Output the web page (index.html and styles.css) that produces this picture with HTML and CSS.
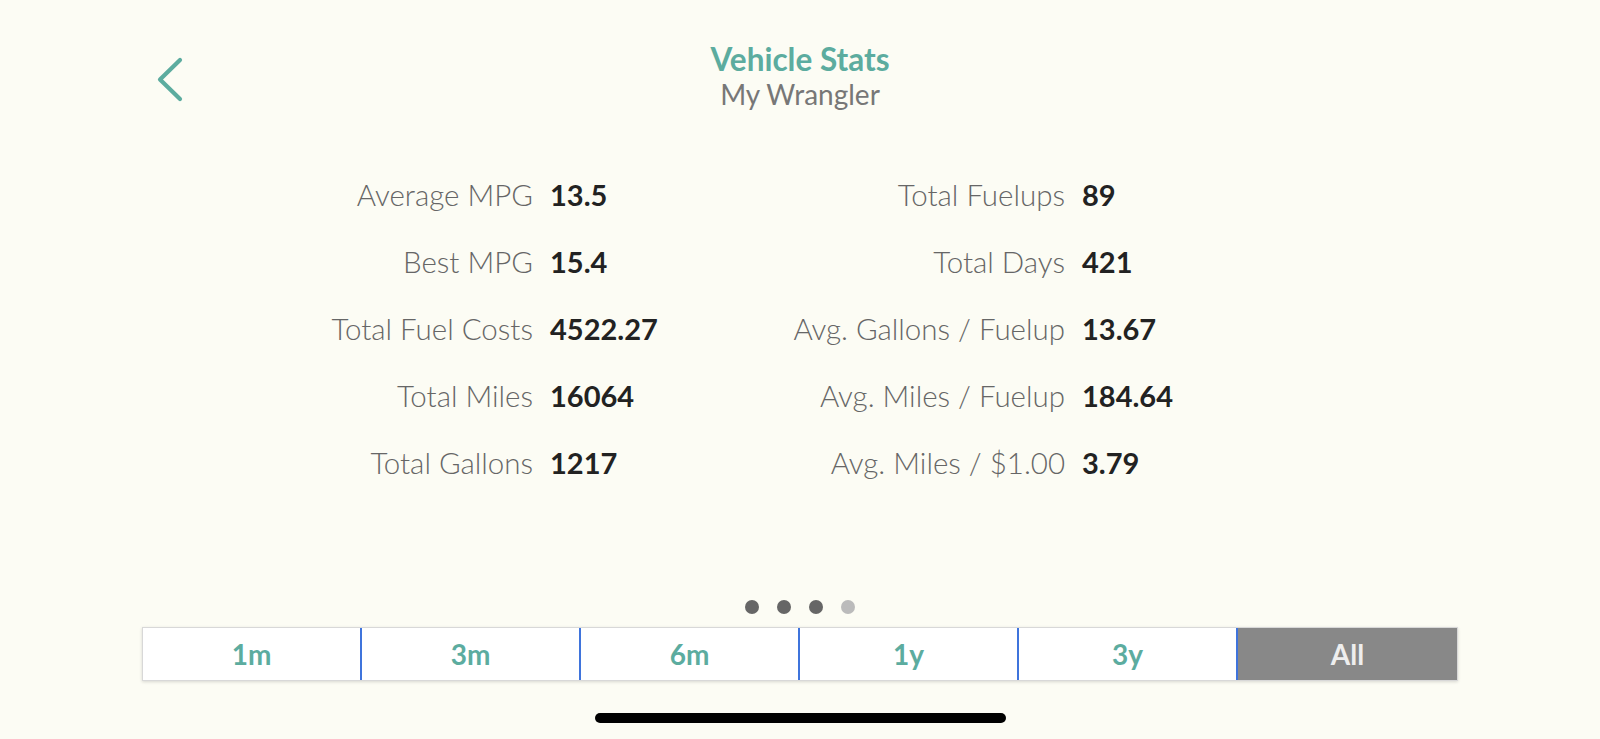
FILE: index.html
```html
<!DOCTYPE html>
<html lang="en">

<head>
    <meta charset="UTF-8">
    <meta name="viewport" content="width=device-width, initial-scale=1.0">
    <title>Vehicle Stats - My Wrangler</title>
    <link rel="stylesheet" href="styles.css">
</head>

<body>

    <header class="top-bar">
        <a class="back" href="#" aria-label="Back">
            <svg width="28" height="46" viewBox="0 0 28 46">
                <path d="M24 4 L4 23.5 L24 43" fill="none" stroke="#5cac9f" stroke-width="4.2" stroke-linecap="round" stroke-linejoin="round"/>
            </svg>
        </a>
        <div class="titles">
            <h1>Vehicle Stats</h1>
            <p>My Wrangler</p>
        </div>
        <div></div>
    </header>

    <main>
        <section class="stats">
            <span class="label">Average MPG</span><span class="value">13.5</span>
            <span class="label">Total Fuelups</span><span class="value">89</span>

            <span class="label">Best MPG</span><span class="value">15.4</span>
            <span class="label">Total Days</span><span class="value">421</span>

            <span class="label">Total Fuel Costs</span><span class="value">4522.27</span>
            <span class="label">Avg. Gallons / Fuelup</span><span class="value">13.67</span>

            <span class="label">Total Miles</span><span class="value">16064</span>
            <span class="label">Avg. Miles / Fuelup</span><span class="value">184.64</span>

            <span class="label">Total Gallons</span><span class="value">1217</span>
            <span class="label">Avg. Miles / $1.00</span><span class="value">3.79</span>
        </section>

        <div class="pager">
            <span class="dot"></span>
            <span class="dot"></span>
            <span class="dot"></span>
            <span class="dot dim"></span>
        </div>

        <div class="ranges">
            <button>1m</button>
            <button>3m</button>
            <button>6m</button>
            <button>1y</button>
            <button>3y</button>
            <button class="active">All</button>
        </div>
    </main>

    <div class="home-bar"></div>

</body>

</html>
```

FILE: styles.css
```css
body {
    font-family: Lato, 'Open Sans', sans-serif;
    margin: 0;
    padding: 0;
    background-color: #fcfcf4;
    color: #222;
    height: 739px;
    overflow: hidden;
}

.top-bar {
    display: grid;
    grid-template-columns: 1fr auto 1fr;
    padding-top: 41px;
}

.back {
    justify-self: start;
    margin-left: 156px;
    margin-top: 15px;
    display: block;
}

.titles {
    text-align: center;
}

.titles h1 {
    margin: 0;
    font-size: 31.5px;
    line-height: 1.15;
    font-weight: 700;
    color: #5cac9f;
}

.titles p {
    margin: 1px 0 0;
    font-size: 28px;
    line-height: 1.15;
    color: #777;
}

.stats {
    display: grid;
    grid-template-columns: 533px 200px 298px 1fr;
    grid-auto-rows: 67px;
    column-gap: 17px;
    margin-top: 51px;
    line-height: 67px;
}

.stats .label {
    text-align: right;
    font-size: 29.5px;
    font-weight: 300;
    color: #666;
}

.stats .value {
    font-size: 29px;
    font-weight: 700;
    color: #222;
}

.pager {
    display: flex;
    justify-content: center;
    gap: 18px;
    margin-top: 104px;
}

.dot {
    width: 14px;
    height: 14px;
    border-radius: 50%;
    background-color: #666;
}

.dot.dim {
    background-color: #bbb;
}

.ranges {
    display: grid;
    grid-template-columns: repeat(6, 1fr);
    margin: 13px 142px 0;
    height: 54px;
    background-color: #fff;
    border: 1px solid #d8d8d8;
    box-shadow: 0 1px 3px rgba(0, 0, 0, 0.15);
    box-sizing: border-box;
}

.ranges button {
    font-family: inherit;
    font-size: 28px;
    font-weight: 700;
    color: #5cac9f;
    background: none;
    border: none;
    border-right: 2px solid #3f74dc;
    padding: 0;
    cursor: pointer;
}

.ranges button:last-child {
    border-right: none;
}

.ranges button.active {
    background-color: #888;
    color: #eee;
}

.home-bar {
    width: 411px;
    height: 10px;
    border-radius: 5px;
    background-color: #000;
    margin: 32px auto 0;
}
```
